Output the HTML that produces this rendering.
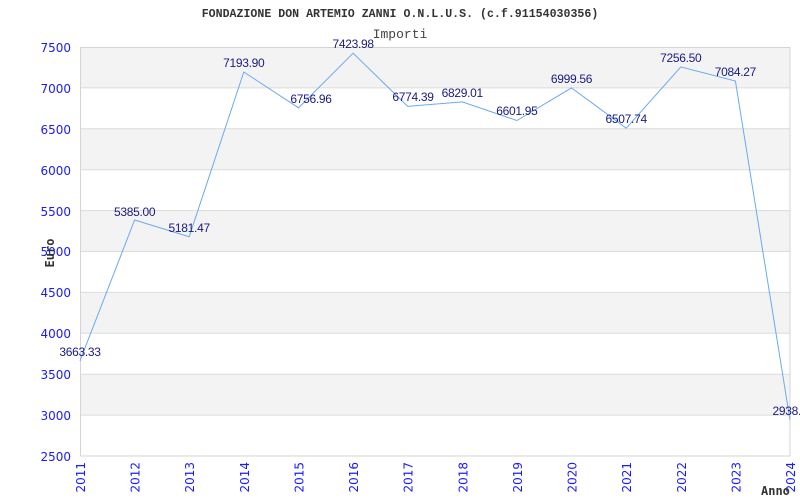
<!DOCTYPE html>
<html><head><meta charset="utf-8"><style>body{margin:0;background:#fff}svg{display:block}</style></head><body>
<svg width="800" height="500" xmlns="http://www.w3.org/2000/svg">
<rect width="800" height="500" fill="#fff"/>
<g fill="#f3f3f3">
<rect x="80" y="47" width="710" height="40.9"/>
<rect x="80" y="128.8" width="710" height="40.9"/>
<rect x="80" y="210.6" width="710" height="40.9"/>
<rect x="80" y="292.4" width="710" height="40.9"/>
<rect x="80" y="374.2" width="710" height="40.9"/>
</g>
<g stroke="#dcdcdc" stroke-width="1">
<line x1="80" x2="790" y1="87.9" y2="87.9"/><line x1="80" x2="790" y1="128.8" y2="128.8"/>
<line x1="80" x2="790" y1="169.7" y2="169.7"/><line x1="80" x2="790" y1="210.6" y2="210.6"/>
<line x1="80" x2="790" y1="251.5" y2="251.5"/><line x1="80" x2="790" y1="292.4" y2="292.4"/>
<line x1="80" x2="790" y1="333.3" y2="333.3"/><line x1="80" x2="790" y1="374.2" y2="374.2"/>
<line x1="80" x2="790" y1="415.1" y2="415.1"/>
</g>
<rect x="80.5" y="47.5" width="709.5" height="408.5" fill="none" stroke="#d4d4d4"/>
<text x="400" y="17" text-anchor="middle" font-family="Liberation Mono, monospace" font-weight="bold" font-size="11.6" fill="#333">FONDAZIONE DON ARTEMIO ZANNI O.N.L.U.S. (c.f.91154030356)</text>
<text x="400" y="38" text-anchor="middle" font-family="Liberation Mono, monospace" font-size="13" fill="#444">Importi</text>
<g font-family="DejaVu Sans, sans-serif" font-size="12" fill="#1a1aff" text-anchor="end">
<text x="71" y="52">7500</text><text x="71" y="93">7000</text><text x="71" y="134">6500</text>
<text x="71" y="175">6000</text><text x="71" y="216">5500</text><text x="71" y="256">5000</text>
<text x="71" y="297">4500</text><text x="71" y="338">4000</text><text x="71" y="379">3500</text>
<text x="71" y="420">3000</text><text x="71" y="461">2500</text>
</g>
<g font-family="DejaVu Sans, sans-serif" font-size="12" fill="#1a1aff" text-anchor="end">
<text transform="translate(85,462) rotate(-90)">2011</text>
<text transform="translate(139.6,462) rotate(-90)">2012</text>
<text transform="translate(194.2,462) rotate(-90)">2013</text>
<text transform="translate(248.8,462) rotate(-90)">2014</text>
<text transform="translate(303.5,462) rotate(-90)">2015</text>
<text transform="translate(358.1,462) rotate(-90)">2016</text>
<text transform="translate(412.7,462) rotate(-90)">2017</text>
<text transform="translate(467.3,462) rotate(-90)">2018</text>
<text transform="translate(521.9,462) rotate(-90)">2019</text>
<text transform="translate(576.5,462) rotate(-90)">2020</text>
<text transform="translate(631.2,462) rotate(-90)">2021</text>
<text transform="translate(685.8,462) rotate(-90)">2022</text>
<text transform="translate(740.4,462) rotate(-90)">2023</text>
<text transform="translate(795,462) rotate(-90)">2024</text>
</g>
<text transform="translate(54,253) rotate(-90)" text-anchor="middle" font-family="DejaVu Sans Mono, monospace" font-weight="bold" font-size="12" fill="#333">Euro</text>
<text x="761" y="495" font-family="DejaVu Sans Mono, monospace" font-weight="bold" font-size="12" fill="#333">Anno</text>
<polyline fill="none" stroke="#6aaaf0" stroke-width="1" points="80,360.8 134.6,220 189.2,236.7 243.8,72 298.5,107.8 353.1,53.2 407.7,106.4 462.3,101.9 516.9,120.5 571.5,87.9 626.2,128.2 680.8,66.9 735.4,81 790,420.1"/>
<g style="font-family:'Liberation Sans',Arial,sans-serif;font-size:12px;letter-spacing:-0.3px" fill="#1a1a80" text-anchor="middle">
<text x="80" y="356">3663.33</text><text x="134.6" y="216">5385.00</text><text x="189.2" y="232">5181.47</text>
<text x="243.8" y="67">7193.90</text><text x="311" y="103">6756.96</text><text x="353.1" y="48">7423.98</text>
<text x="413" y="101">6774.39</text><text x="462.3" y="97">6829.01</text><text x="516.9" y="115">6601.95</text>
<text x="571.5" y="83">6999.56</text><text x="626.2" y="123">6507.74</text><text x="680.8" y="62">7256.50</text>
<text x="735.4" y="76">7084.27</text><text x="790" y="415">2938.4</text>
</g>
</svg>
</body></html>
